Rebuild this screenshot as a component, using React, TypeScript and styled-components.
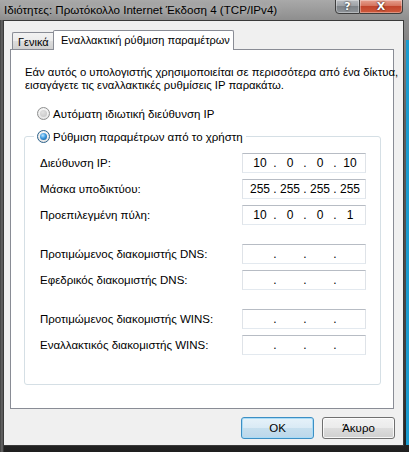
import React from 'react';
import styled, { createGlobalStyle, css } from 'styled-components';

const Global = createGlobalStyle`
  html, body { margin: 0; padding: 0; background: #222; }
  body { font-family: "Liberation Sans", Arial, sans-serif; font-size: 11.5px; color: #000; }
  * { box-sizing: border-box; }
`;

const Window = styled.div`
  width: 409px;
  height: 452px;
  display: flex;
  flex-direction: column;
  position: relative;
  overflow: hidden;
  background:
    linear-gradient(to right, rgba(0,0,0,0) 406px, #1b9ccf 406px) 0 40px / 100% 405px no-repeat,
    linear-gradient(to right, #3e3e3e 0, #6a6a6a 2px, #4a4a4a 3px, rgba(0,0,0,0) 4px) 0 20px / 100% 100% no-repeat,
    linear-gradient(to bottom, #a9a9a9 0, #8e8e8e 20px, #606060 120px, #3c3c3c 380px, #1f1f1f 452px);
`;

const TitleBar = styled.div`
  height: 20px;
  flex: none;
  display: flex;
  align-items: flex-start;
  padding: 0 6px 0 4px;
`;

const Title = styled.div`
  flex: 1;
  font-family: "Liberation Sans", Arial, sans-serif;
  font-size: 11.6px;
  line-height: 20px;
  color: #000;
  white-space: nowrap;
  text-shadow: 0 0 6px rgba(255, 255, 255, 0.55);
`;

const CapButtons = styled.div`
  display: flex;
  margin-top: -1px;
`;

const CapButton = styled.div<{ $close?: boolean }>`
  height: 15px;
  width: ${p => (p.$close ? 43 : 25)}px;
  border: 1px solid #3d3d3d;
  display: flex;
  align-items: center;
  justify-content: center;
  color: #fff;
  font-family: "DejaVu Sans", sans-serif;
  font-weight: bold;
  font-size: 11px;
  line-height: 1;
  text-shadow: 0 0 2px #000;
  box-shadow: inset 0 0 0 1px rgba(255, 255, 255, 0.35);
  ${p =>
    p.$close
      ? css`
          border-left: none;
          border-radius: 0 0 4px 0;
          background: linear-gradient(#e6a08f 0, #d5735d 45%, #c1442b 50%, #cf5a3c 100%);
        `
      : css`
          border-radius: 0 0 0 4px;
          background: linear-gradient(#b9bcc0 0, #9da1a6 45%, #7e8388 50%, #8f9499 100%);
        `}
`;

const Client = styled.div`
  flex: 1;
  margin: 0 5px 6px 3px;
  border: 1px solid #3a3a3a;
  background: #f0f0f0;
  display: flex;
  flex-direction: column;
  padding: 9px 9px 6px 6px;
`;

const TabRow = styled.div`
  display: flex;
  align-items: flex-end;
  height: 20px;
  padding-left: 2px;
  margin-bottom: -1px;
  position: relative;
  z-index: 1;
`;

const Tab = styled.div<{ $active?: boolean }>`
  border: 1px solid #898c95;
  border-bottom: none;
  white-space: nowrap;
  font-size: 11px;
  ${p =>
    p.$active
      ? css`
          width: 181px;
          height: 20px;
          background: #fff;
          padding-left: 7px;
          line-height: 19px;
          border-radius: 2px 2px 0 0;
        `
      : css`
          width: 41px;
          height: 17px;
          margin-bottom: 1px;
          border-right: none;
          padding-left: 5px;
          line-height: 18px;
          border-radius: 2px 0 0 0;
          background: linear-gradient(#f2f2f2 0, #ebebeb 50%, #dddddd 50%, #cfcfcf 100%);
        `}
`;

const Panel = styled.div`
  flex: 1;
  background: #fff;
  border: 1px solid #898c95;
  display: flex;
  flex-direction: column;
  padding: 16px 12px 0 13px;
`;

const Description = styled.div`
  padding-left: 1px;
  line-height: 13px;
  font-size: 11.3px;
  white-space: nowrap;
`;

const RadioRow = styled.label<{ $top?: number }>`
  display: flex;
  align-items: center;
  height: 15px;
  gap: 3px;
  white-space: nowrap;
  margin-top: ${p => p.$top ?? 0}px;
  padding-left: ${p => (p.$top !== undefined ? 13 : 0)}px;
`;

const RadioCircle = styled.span<{ $checked?: boolean }>`
  width: 13px;
  height: 13px;
  flex: none;
  border-radius: 50%;
  border: 1px solid ${p => (p.$checked ? '#2c628b' : '#8e8f8f')};
  background: radial-gradient(circle at 50% 35%, #ffffff 0, #eeeeee 55%, #d6d6d6 100%);
  display: flex;
  align-items: center;
  justify-content: center;
  &::after {
    content: '';
    width: 7px;
    height: 7px;
    border-radius: 50%;
    background: ${p =>
      p.$checked
        ? 'radial-gradient(circle at 40% 35%, #bfe6ff 0, #3d9be0 45%, #0b4d8c 100%)'
        : 'radial-gradient(circle at 40% 35%, #e2e2e2 0, #cfcfcf 60%, #c4c4c4 100%)'};
  }
`;

const Group = styled.fieldset`
  margin: 8px 0 0 0;
  min-width: 0;
  border: 1px solid #d5dfe5;
  border-radius: 3px;
  padding: 0 14px 29px 15px;
  display: flex;
  flex-direction: column;
`;

const Legend = styled.legend`
  margin-left: -6px;
  padding: 0 3px;
`;

const Rows = styled.div<{ $top: number }>`
  display: flex;
  flex-direction: column;
  gap: 6px;
  margin-top: ${p => p.$top}px;
`;

const FieldRow = styled.div`
  display: flex;
  align-items: center;
  justify-content: space-between;
  height: 20px;
  white-space: nowrap;
`;

const IpBox = styled.div`
  width: 124px;
  height: 20px;
  background: #fff;
  border: 1px solid;
  border-color: #b7bcc4 #dfe3e8 #e3e9ef #dfe3e8;
  padding-left: 4px;
  display: grid;
  grid-template-columns: 26px 4px 26px 4px 26px 4px 26px;
  align-items: center;
  line-height: 18px;
  font-size: 12px;
`;

const Seg = styled.span`
  text-align: center;
`;

const Dot = styled.span`
  text-align: center;
`;

const Buttons = styled.div`
  display: flex;
  justify-content: flex-end;
  gap: 8px;
  margin-top: 8px;
  margin-right: -1px;
`;

const Button = styled.button<{ $default?: boolean }>`
  width: 73px;
  height: 22px;
  border-radius: 3px;
  font-family: "Liberation Sans", Arial, sans-serif;
  font-size: 11.5px;
  color: #000;
  padding: 0;
  border: 1px solid ${p => (p.$default ? '#3c8fc4' : '#707070')};
  background: ${p =>
    p.$default
      ? 'linear-gradient(#e6f2f9 0, #d9eaf5 50%, #c6dfee 50%, #bcd7ea 100%)'
      : 'linear-gradient(#f2f2f2 0, #ebebeb 50%, #dddddd 50%, #cfcfcf 100%)'};
  box-shadow: inset 0 0 0 1px ${p => (p.$default ? '#a9dbf6' : 'rgba(255,255,255,0.8)')};
`;

const IpField = ({ parts }: { parts?: string[] }) => {
  const p = parts ?? ['', '', '', ''];
  return (
    <IpBox>
      <Seg>{p[0]}</Seg>
      <Dot>.</Dot>
      <Seg>{p[1]}</Seg>
      <Dot>.</Dot>
      <Seg>{p[2]}</Seg>
      <Dot>.</Dot>
      <Seg>{p[3]}</Seg>
    </IpBox>
  );
};

export default function App() {
  return (
    <>
      <Global />
      <Window>
        <TitleBar>
          <Title>Ιδιότητες: Πρωτόκολλο Internet Έκδοση 4 (TCP/IPv4)</Title>
          <CapButtons>
            <CapButton>?</CapButton>
            <CapButton $close>X</CapButton>
          </CapButtons>
        </TitleBar>
        <Client>
          <TabRow>
            <Tab>Γενικά</Tab>
            <Tab $active>Εναλλακτική ρύθμιση παραμέτρων</Tab>
          </TabRow>
          <Panel>
            <Description>
              Εάν αυτός ο υπολογιστής χρησιμοποιείται σε περισσότερα από ένα δίκτυα,
              <br />
              εισαγάγετε τις εναλλακτικές ρυθμίσεις IP παρακάτω.
            </Description>
            <RadioRow $top={14}>
              <RadioCircle />
              Αυτόματη ιδιωτική διεύθυνση IP
            </RadioRow>
            <Group>
              <Legend>
                <RadioRow>
                  <RadioCircle $checked />
                  Ρύθμιση παραμέτρων από το χρήστη
                </RadioRow>
              </Legend>
              <Rows $top={9}>
                <FieldRow>
                  Διεύθυνση IP:
                  <IpField parts={['10', '0', '0', '10']} />
                </FieldRow>
                <FieldRow>
                  Μάσκα υποδικτύου:
                  <IpField parts={['255', '255', '255', '255']} />
                </FieldRow>
                <FieldRow>
                  Προεπιλεγμένη πύλη:
                  <IpField parts={['10', '0', '0', '1']} />
                </FieldRow>
              </Rows>
              <Rows $top={19}>
                <FieldRow>
                  Προτιμώμενος διακομιστής DNS:
                  <IpField />
                </FieldRow>
                <FieldRow>
                  Εφεδρικός διακομιστής DNS:
                  <IpField />
                </FieldRow>
              </Rows>
              <Rows $top={19}>
                <FieldRow>
                  Προτιμώμενος διακομιστής WINS:
                  <IpField />
                </FieldRow>
                <FieldRow>
                  Εναλλακτικός διακομιστής WINS:
                  <IpField />
                </FieldRow>
              </Rows>
            </Group>
          </Panel>
          <Buttons>
            <Button $default>OK</Button>
            <Button>Άκυρο</Button>
          </Buttons>
        </Client>
      </Window>
    </>
  );
}
